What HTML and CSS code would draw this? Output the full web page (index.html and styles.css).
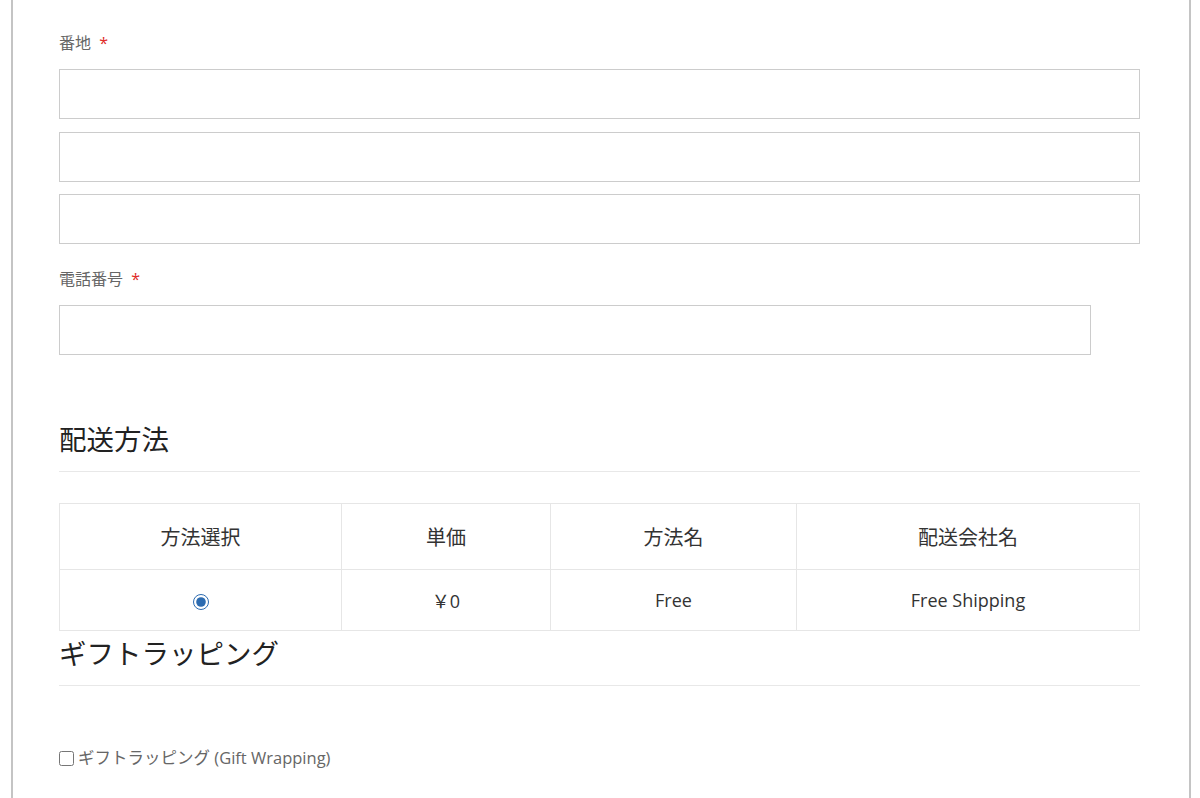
FILE: index.html
```html
<!DOCTYPE html>
<html lang="ja">
<head>
<meta charset="utf-8">
<link rel="stylesheet" href="styles.css">
</head>
<body>
<div class="page">
  <div class="field">
    <label class="label">番地 <span class="req">*</span></label>
    <input class="input" type="text">
    <input class="input" type="text">
    <input class="input" type="text">
  </div>
  <div class="field second">
    <label class="label">電話番号 <span class="req">*</span></label>
    <input class="input phone" type="text">
  </div>

  <h2 class="heading">配送方法</h2>
  <table class="ship">
    <colgroup><col class="c1"><col class="c2"><col class="c3"><col class="c4"></colgroup>
    <thead>
      <tr><th>方法選択</th><th>単価</th><th>方法名</th><th>配送会社名</th></tr>
    </thead>
    <tbody>
      <tr><td><input type="radio" class="radio" name="ship" checked></td><td>￥0</td><td>Free</td><td>Free Shipping</td></tr>
    </tbody>
  </table>

  <h2 class="heading gift">ギフトラッピング</h2>
  <label class="check"><input type="checkbox" class="cb">ギフトラッピング (Gift Wrapping)</label>
</div>
</body>
</html>
```
FILE: styles.css
```css
html, body {
  margin: 0;
  padding: 0;
  background: #fff;
}
body {
  font-family: "Open Sans", "Noto Sans CJK JP", sans-serif;
  color: #333;
}
.page {
  margin-left: 11px;
  width: 1180px;
  min-height: 798px;
  border-left: 2px solid #c4c4c4;
  border-right: 2px solid #c4c4c4;
  padding: 30px 49px 0 46px;
  box-sizing: border-box;
}
.field {
  display: flex;
  flex-direction: column;
}
.field.second {
  margin-top: 21.5px;
}
.label {
  font-size: 16px;
  color: #666;
  line-height: 26px;
  margin-bottom: 13px;
}
.req {
  color: #e02b27;
  margin-left: 4px;
}
.input {
  display: block;
  width: 1081px;
  height: 50px;
  box-sizing: border-box;
  border: 1px solid #ccc;
  margin: 0;
  padding: 0 10px;
  font-size: 14px;
  background: #fff;
}
.input + .input {
  margin-top: 12.5px;
}
.phone {
  width: 1032px;
}
.heading {
  font-weight: 400;
  font-size: 27.5px;
  color: #222;
  margin: 67px 0 0 0;
  line-height: 36px;
  padding-bottom: 13px;
  border-bottom: 1px solid #e8e8e8;
  width: 1081px;
}
.ship {
  margin-top: 31px;
  width: 1080px;
  table-layout: fixed;
  border-collapse: collapse;
  color: #333;
}
.c1 { width: 282px; }
.c2 { width: 209px; }
.c3 { width: 246px; }
.c4 { width: 343px; }
.ship th, .ship td {
  border: 1px solid #e6e6e6;
  text-align: center;
  font-weight: 400;
  padding: 0;
}
.ship th {
  height: 65px;
  font-size: 20px;
}
.ship td {
  height: 60px;
  font-size: 18px;
}
.radio {
  accent-color: #2c6bb0;
  width: 16px;
  height: 16px;
  margin: 0;
  vertical-align: middle;
}
.heading.gift {
  margin-top: 5px;
}
.check {
  display: block;
  margin-top: 60px;
  font-size: 16.5px;
  line-height: 24px;
  color: #666;
}
.cb {
  margin: 0 4px 0 0;
  width: 15px;
  height: 15px;
  vertical-align: -2px;
}
```
